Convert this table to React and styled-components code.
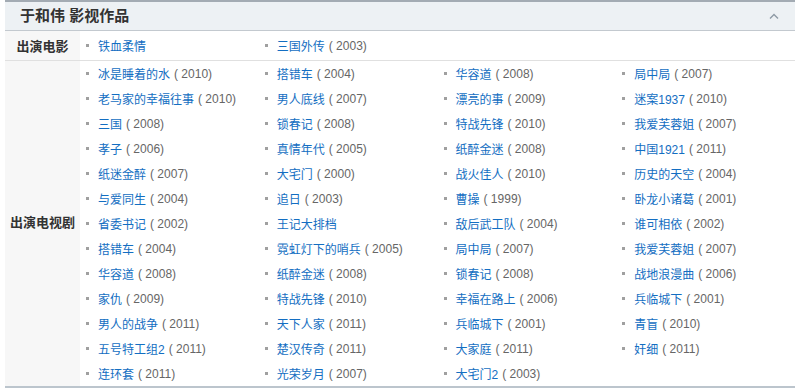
import React from "react";
import styled, { createGlobalStyle } from "styled-components";

const Global = createGlobalStyle`
  html, body { margin: 0; padding: 0; background: #fff; }
  body { font-family: "Liberation Sans", Arial, "Noto Sans CJK SC", sans-serif; }
`;

const Panel = styled.section`
  margin-left: 5px;
  width: 790px;
  border-top: 2px solid #a3abb3;
  border-bottom: 2px solid #bcc5cd;
`;

const Header = styled.header`
  height: 28px;
  background: #edf1f4;
  border-bottom: 1px solid #c3c9cf;
  display: flex;
  align-items: center;
  justify-content: space-between;
  padding: 0 16px 0 15px;
`;

const Title = styled.h2`
  margin: 0;
  font-size: 15px;
  font-weight: bold;
  color: #333;
  font-family: "Liberation Sans", "Noto Sans CJK SC", sans-serif;
  line-height: 28px;
`;

const Section = styled.div`
  display: grid;
  grid-template-columns: 75px 1fr;
  border-bottom: ${(p) => (p.$divider ? "1px solid #e0e0e0" : "none")};
`;

const Label = styled.div`
  background: #f7f7f7;
  display: flex;
  align-items: center;
  justify-content: center;
  font-size: 13px;
  font-weight: bold;
  color: #333;
  font-family: "Liberation Sans", "Noto Sans CJK SC", sans-serif;
  padding-bottom: ${(p) => p.$nudge || 0}px;
`;

const List = styled.ul`
  margin: 0;
  padding: 0;
  list-style: none;
  display: grid;
  grid-template-columns: repeat(4, 1fr);
  grid-auto-rows: ${(p) => p.$row || 25}px;
`;

const Item = styled.li`
  display: flex;
  align-items: center;
  padding-left: 6px;
  font-size: 12px;
  white-space: nowrap;
  font-family: "Liberation Sans", "Noto Sans CJK SC", sans-serif;
`;

const Bullet = styled.span`
  width: 3px;
  height: 3px;
  background: #a0a0a0;
  margin-right: 9px;
  flex: none;
`;

const Name = styled.a`
  color: #136ec2;
  text-decoration: none;
`;

const Year = styled.span`
  color: #666;
  margin-left: 4px;
`;

const Chevron = () => (
  <svg width="10" height="6" viewBox="0 0 10 6">
    <polyline points="1,5.5 5,1.5 9,5.5" fill="none" stroke="#8e9aa5" strokeWidth="1.4" />
  </svg>
);

const films = [["铁血柔情"], ["三国外传", "2003"]];

const tv = [
  ["冰是睡着的水", "2010"], ["搭错车", "2004"], ["华容道", "2008"], ["局中局", "2007"],
  ["老马家的幸福往事", "2010"], ["男人底线", "2007"], ["漂亮的事", "2009"], ["迷案1937", "2010"],
  ["三国", "2008"], ["锁春记", "2008"], ["特战先锋", "2010"], ["我爱芙蓉姐", "2007"],
  ["孝子", "2006"], ["真情年代", "2005"], ["纸醉金迷", "2008"], ["中国1921", "2011"],
  ["纸迷金醉", "2007"], ["大宅门", "2000"], ["战火佳人", "2010"], ["历史的天空", "2004"],
  ["与爱同生", "2004"], ["追日", "2003"], ["曹操", "1999"], ["卧龙小诸葛", "2001"],
  ["省委书记", "2002"], ["王记大排档"], ["敌后武工队", "2004"], ["谁可相依", "2002"],
  ["搭错车", "2004"], ["霓虹灯下的哨兵", "2005"], ["局中局", "2007"], ["我爱芙蓉姐", "2007"],
  ["华容道", "2008"], ["纸醉金迷", "2008"], ["锁春记", "2008"], ["战地浪漫曲", "2006"],
  ["家仇", "2009"], ["特战先锋", "2010"], ["幸福在路上", "2006"], ["兵临城下", "2001"],
  ["男人的战争", "2011"], ["天下人家", "2011"], ["兵临城下", "2001"], ["青盲", "2010"],
  ["五号特工组2", "2011"], ["楚汉传奇", "2011"], ["大家庭", "2011"], ["奸细", "2011"],
  ["连环套", "2011"], ["光荣岁月", "2007"], ["大宅门2", "2003"],
];

const Works = ({ items }) =>
  items.map(([name, year], i) => (
    <Item key={i}>
      <Bullet />
      <Name>{name}</Name>
      {year && <Year>( {year})</Year>}
    </Item>
  ));

export default function App() {
  return (
    <>
      <Global />
      <Panel>
        <Header>
          <Title>于和伟 影视作品</Title>
          <Chevron />
        </Header>
        <Section $divider>
          <Label>出演电影</Label>
          <List $row={29}>
            <Works items={films} />
          </List>
        </Section>
        <Section>
          <Label $nudge={4}>出演电视剧</Label>
          <List $row={25}>
            <Works items={tv} />
          </List>
        </Section>
      </Panel>
    </>
  );
}
